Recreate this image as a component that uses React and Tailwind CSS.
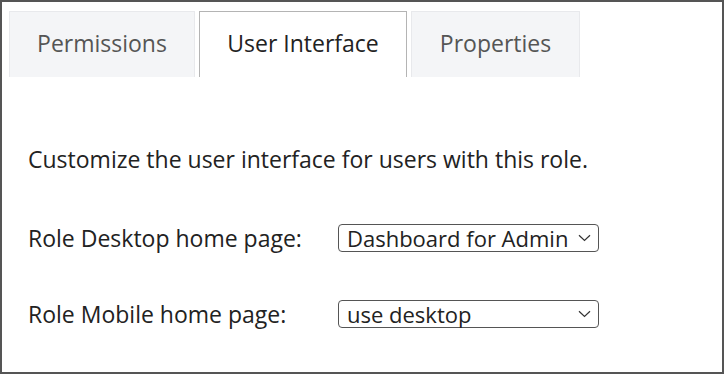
import { useState } from "react";

const tabs = [
  { name: "Permissions", w: "w-[186px]" },
  { name: "User Interface", w: "w-[208px]" },
  { name: "Properties", w: "w-[169px]" },
];

function Chevron() {
  return (
    <svg width="13" height="8" viewBox="0 0 13 8" className="shrink-0">
      <path d="M1 1.2 L6.5 6.5 L12 1.2" fill="none" stroke="#333" strokeWidth="1.2" />
    </svg>
  );
}

function Select({ value }) {
  return (
    <div className="w-[261px] h-[28px] flex items-center justify-between border border-[#555] rounded-[4px] pl-[8px] pr-[7px] text-[22px] leading-none text-[#222]">
      <span>{value}</span>
      <Chevron />
    </div>
  );
}

export default function App() {
  const [active] = useState("User Interface");

  return (
    <div
      className="w-[724px] h-[374px] border-2 border-[#555] bg-white flex flex-col"
      style={{ fontFamily: "'Open Sans', sans-serif" }}
    >
      <div className="flex gap-[4px] pl-[7px] pt-[9px]">
        {tabs.map((t) => (
          <div
            key={t.name}
            className={
              t.name === active
                ? `${t.w} h-[66px] pb-[3px] flex items-center justify-center text-[23px] text-[#222] bg-white border border-b-0 border-[#b4b4b4]`
                : `${t.w} h-[66px] pb-[3px] flex items-center justify-center text-[23px] text-[#555] bg-[#f4f5f7] border border-b-0 border-[#e8e9ec]`
            }
          >
            {t.name}
          </div>
        ))}
      </div>
      <div className="px-[26px] pt-[71px] text-[23px] text-[#222]">
        <p className="leading-none">Customize the user interface for users with this role.</p>
        <div className="flex items-center mt-[50px]">
          <span className="w-[310px]">Role Desktop home page:</span>
          <Select value="Dashboard for Admin" />
        </div>
        <div className="flex items-center mt-[41px]">
          <span className="w-[310px]">Role Mobile home page:</span>
          <Select value="use desktop" />
        </div>
      </div>
    </div>
  );
}
